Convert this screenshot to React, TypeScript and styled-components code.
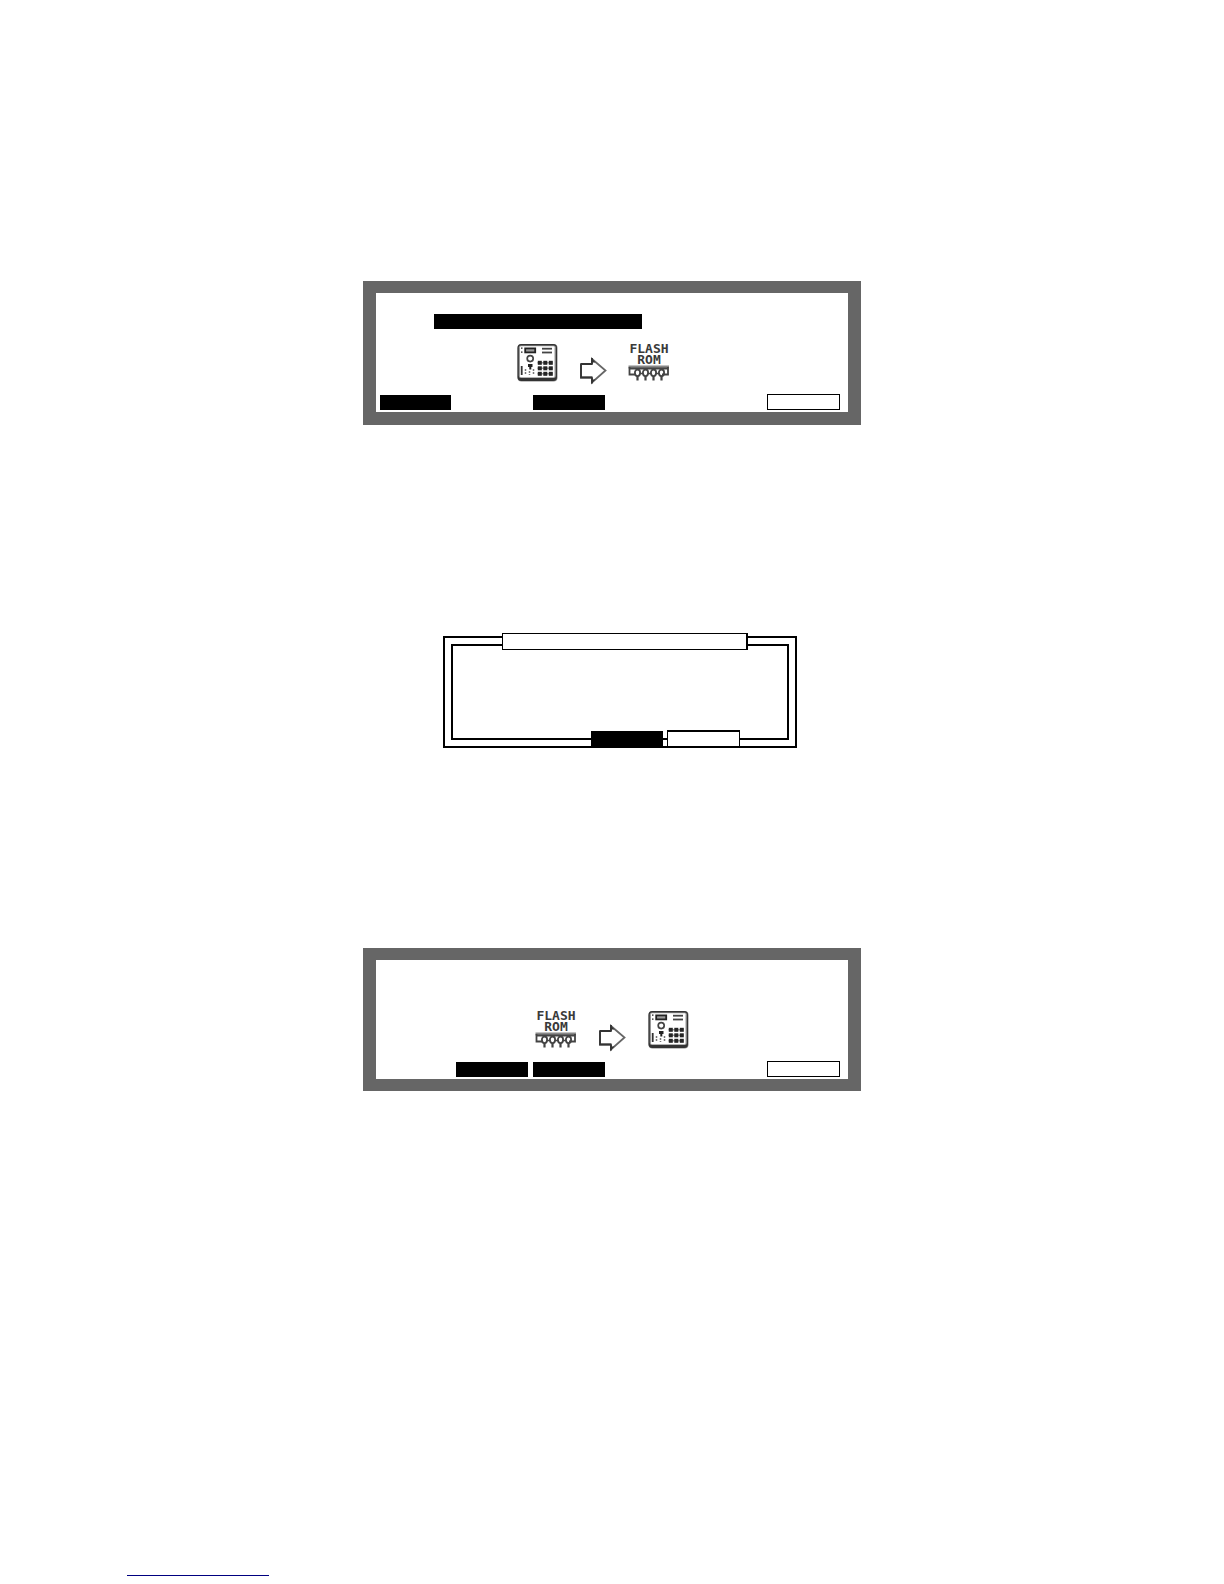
import React from "react";
import styled, { createGlobalStyle } from "styled-components";

const GlobalStyle = createGlobalStyle`
  *, *::before, *::after { box-sizing: border-box; }
  body {
    margin: 0;
    background: #fff;
    color: #000;
    font-family: "Liberation Sans", sans-serif;
  }
`;

const Page = styled.main`
  min-height: 100vh;
  display: flex;
  flex-direction: column;
  align-items: center;
  padding: 281px 16px 8px;
`;

const Lcd = styled.section<{ $base: number }>`
  width: 100%;
  max-width: 498px;
  display: flex;
  flex-direction: column;
  border: solid #666;
  border-width: 12px 13px ${(p) => p.$base}px;
  background: #fff;
`;

const Heading = styled.div`
  height: 50px;
  padding: 21px 0 0 58px;
`;

const Highlight = styled.div`
  width: 208px;
  height: 15px;
  background: #000;
`;

const Transfer = styled.div<{ $shift?: number }>`
  display: flex;
  justify-content: center;
  align-items: flex-start;
  gap: 21px;
  height: 51px;
  padding-right: ${(p) => p.$shift ?? 0}px;
`;

const ArrowSlot = styled.div`
  display: flex;
  padding-top: 14px;
`;

const SoftKeys = styled.div`
  display: grid;
  grid-template-columns: 71px 72px 72px 1fr 73px;
  column-gap: 5px;
  align-items: end;
  height: 18px;
  padding: 0 8px 2px 4px;
`;

const Key = styled.button<{ $column: number }>`
  grid-column: ${(p) => p.$column};
  grid-row: 1;
  height: 15px;
  padding: 0;
  border: 0;
  background: #000;
`;

const OutlineKey = styled(Key)`
  height: 16px;
  border: 1px solid #000;
  background: #fff;
`;

const DialogArea = styled.div`
  width: 100%;
  display: flex;
  justify-content: center;
  padding: 211px 0 200px 16px;
`;

const Dialog = styled.section`
  position: relative;
  width: 100%;
  max-width: 354px;
  padding: 6px;
  border: 2px solid #000;
`;

const DialogBody = styled.div`
  height: 96px;
  border: 2px solid #000;
`;

const DialogTitle = styled.div`
  position: absolute;
  top: -5px;
  left: 57px;
  width: 246px;
  height: 17px;
  border: solid #000;
  border-width: 1px 2px 1px 1px;
  background: #fff;
`;

const DialogKeys = styled.div`
  position: absolute;
  bottom: 0;
  left: 146px;
  display: flex;
  align-items: flex-end;
  gap: 4px;
`;

const DialogKey = styled.button<{ $outline?: boolean }>`
  width: ${(p) => (p.$outline ? 73 : 72)}px;
  height: ${(p) => (p.$outline ? 16 : 15)}px;
  padding: 0;
  border: solid #000;
  border-width: ${(p) => (p.$outline ? "2px 1px 0" : "0")};
  background: ${(p) => (p.$outline ? "#fff" : "#000")};
`;

const Footer = styled.footer`
  width: 100%;
  margin-top: auto;
  padding-left: 111px;
`;

const FooterLink = styled.a`
  display: block;
  width: 142px;
  height: 16px;
  border-bottom: 1px solid #000080;
`;

const Chip = styled.div`
  width: 42px;
  display: flex;
  flex-direction: column;
  align-items: center;
`;

const ChipLabel = styled.div`
  color: #3a3a3a;
  font: bold 13px/11px "DejaVu Sans Mono", monospace;
  text-align: center;
`;

function DeviceIcon() {
  return (
    <svg width="42" height="40" viewBox="0 0 42 40" aria-hidden="true">
      <rect x="1.5" y="1" width="40" height="37.5" rx="4" fill="#888" />
      <rect x="1.5" y="1" width="39.5" height="37" rx="4" fill="#333" />
      <rect x="2.8" y="2.5" width="37" height="32.5" rx="2" fill="#999" />
      <rect x="4" y="3.2" width="34.5" height="31" rx="1" fill="#fff" />
      <g fill="#444">
        <rect x="5" y="4.4" width="1.5" height="1.5" />
        <rect x="5" y="8.4" width="1.5" height="1.5" />
        <rect x="26" y="4.8" width="10" height="1.8" />
        <rect x="26" y="8.6" width="10" height="1.8" />
      </g>
      <rect x="9.2" y="5.4" width="10" height="4" fill="#999" stroke="#222" strokeWidth="1.8" />
      <circle cx="14.2" cy="15.6" r="3" fill="#fff" stroke="#444" strokeWidth="1.7" />
      <path d="M12 21h4.5v3h-1.2v2.5h-2V24H12z" fill="#222" />
      <path d="M21.5 19.8h15M21.5 25.3h15M21.5 30.8h15" stroke="#999" strokeWidth="1.4" />
      {[21.8, 27.3, 32.8].map((x) =>
        [17.8, 23.3, 28.8].map((y) => (
          <rect key={`${x}-${y}`} x={x} y={y} width="4" height="4" fill="#252525" />
        ))
      )}
      <path d="M5.7 23v9" stroke="#333" strokeWidth="1.8" />
      <path d="M9.5 26v6M13.5 28v4M17.5 26v6" stroke="#777" strokeWidth="1.5" strokeDasharray="2 1" />
    </svg>
  );
}

function ArrowIcon() {
  return (
    <svg width="28" height="28" viewBox="0 0 28 28" aria-hidden="true">
      <path d="M2 7H13V2L26.5 13.5L13 25.5V20.5H2Z" fill="none" stroke="#666" strokeWidth="1.8" />
      <path d="M13 1v6M13 20.5v6M2 7h11M2 7v13.5h11" fill="none" stroke="#333" strokeWidth="1.8" />
      <path d="M12.5 1l4 4.5h-4zM12.5 26.5l4-4h-4z" fill="#333" />
    </svg>
  );
}

function FlashRomIcon() {
  return (
    <Chip>
      <ChipLabel>
        FLASH
        <br />
        ROM
      </ChipLabel>
      <svg width="42" height="18" viewBox="0 0 42 18" aria-hidden="true">
        <rect x="0.5" y="0.5" width="40.5" height="3" fill="#888" />
        <path d="M1.5 2v7.5h6M40 2v7.5h-6M1.5 3.5H40" fill="none" stroke="#444" strokeWidth="1.8" />
        {[9.5, 17.5, 25.5, 33.5].map((x) => (
          <g key={x} fill="none" stroke="#444">
            <ellipse cx={x} cy="7.8" rx="2.6" ry="3.3" strokeWidth="1.8" />
            <path d={`M${x} 11v4.5`} strokeWidth="2.2" />
          </g>
        ))}
        <path d="M12 8.5h3M20 8.5h3M28 8.5h3" stroke="#444" strokeWidth="1.6" />
      </svg>
    </Chip>
  );
}

export default function App() {
  return (
    <>
      <GlobalStyle />
      <Page>
        <Lcd $base={13} aria-label="Save to flash ROM">
          <Heading>
            <Highlight />
          </Heading>
          <Transfer $shift={38}>
            <DeviceIcon />
            <ArrowSlot>
              <ArrowIcon />
            </ArrowSlot>
            <FlashRomIcon />
          </Transfer>
          <SoftKeys>
            <Key type="button" $column={1} aria-label="Soft key 1" />
            <Key type="button" $column={3} aria-label="Soft key 3" />
            <OutlineKey type="button" $column={5} aria-label="Soft key 6" />
          </SoftKeys>
        </Lcd>

        <DialogArea>
          <Dialog aria-label="Confirmation">
            <DialogBody />
            <DialogTitle />
            <DialogKeys>
              <DialogKey type="button" aria-label="Cancel" />
              <DialogKey type="button" $outline aria-label="Confirm" />
            </DialogKeys>
          </Dialog>
        </DialogArea>

        <Lcd $base={12} aria-label="Load from flash ROM">
          <Heading />
          <Transfer>
            <FlashRomIcon />
            <ArrowSlot>
              <ArrowIcon />
            </ArrowSlot>
            <DeviceIcon />
          </Transfer>
          <SoftKeys>
            <Key type="button" $column={2} aria-label="Soft key 2" />
            <Key type="button" $column={3} aria-label="Soft key 3" />
            <OutlineKey type="button" $column={5} aria-label="Soft key 6" />
          </SoftKeys>
        </Lcd>

        <Footer>
          <FooterLink href="#top" aria-label="Back to top" />
        </Footer>
      </Page>
    </>
  );
}
